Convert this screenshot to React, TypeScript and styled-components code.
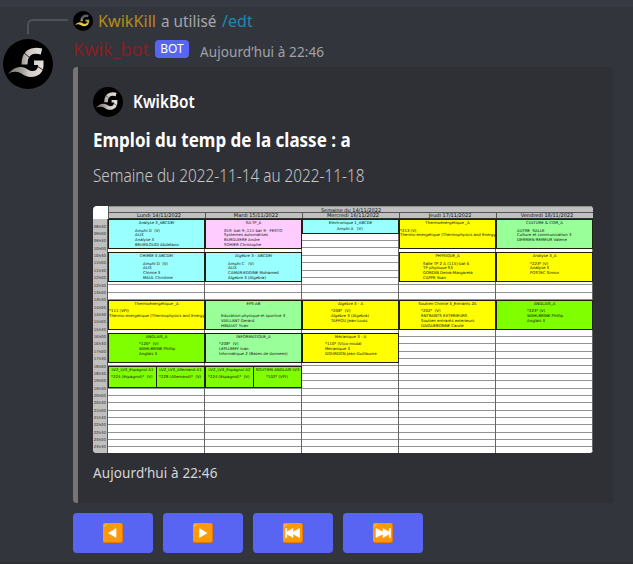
import React from "react";
import styled, { createGlobalStyle } from "styled-components";

const GlobalStyle = createGlobalStyle`
  * { box-sizing: border-box; }
  body { margin: 0; background: #33353d; overflow: hidden; font-family: "Noto Sans", sans-serif; }
`;

const Page = styled.main`
  width: 633px;
  height: 564px;
  border-top: 7px solid #373a42;
  border-bottom: 2px solid #2d2f34;
  background: #33353d;
  display: grid;
  grid-template-columns: 73px 540px;
  align-content: start;
`;

const Gutter = styled.div`
  padding: 12px 0 0 3px;
`;

const ReplySpine = styled.div`
  width: 41px;
  height: 15px;
  margin-left: 24px;
  border: 2px solid #4f5259;
  border-right: 0;
  border-bottom: 0;
  border-top-left-radius: 6px;
`;

const AvatarSvg = styled.svg<{ $size: number }>`
  display: block;
  flex: none;
  width: ${(p) => p.$size}px;
  height: ${(p) => p.$size}px;
`;

const AvatarSlot = styled.div`
  margin-top: 5px;
`;

const Content = styled.div`
  display: flex;
  flex-direction: column;
`;

const Line = styled.div<{ $h: number }>`
  display: flex;
  align-items: center;
  height: ${(p) => p.$h}px;
`;

const Text = styled.span<{
  $size: number;
  $color: string;
  $weight?: number;
  $track?: number;
  $squeeze?: number;
  $ml?: number;
  $mt?: number;
}>`
  white-space: pre;
  font-size: ${(p) => p.$size}px;
  line-height: 24px;
  color: ${(p) => p.$color};
  font-weight: ${(p) => p.$weight ?? 400};
  letter-spacing: ${(p) => p.$track ?? 0}px;
  transform: ${(p) => (p.$squeeze ? `scaleX(${p.$squeeze})` : "none")};
  transform-origin: left center;
  margin-left: ${(p) => p.$ml ?? 0}px;
  margin-top: ${(p) => p.$mt ?? 0}px;
`;

const BotTag = styled.span`
  width: 34px;
  height: 18px;
  margin: 0 0 0 6px;
  border-radius: 4px;
  background: #5865f2;
  color: #fff;
  font-size: 12px;
  line-height: 18px;
  text-align: center;
`;

const Embed = styled.article`
  width: 540px;
  height: 436px;
  margin-top: 5px;
  padding: 20px 0 0 15px;
  border-left: 5px solid #757575;
  border-radius: 4px;
  background: #2f3035;
`;

const Actions = styled.div`
  display: flex;
  gap: 10px;
  margin-top: 10px;
`;

const ActionButton = styled.button`
  width: 80px;
  height: 40px;
  padding: 0;
  border: 0;
  border-radius: 4px;
  background: #5865f2;
  display: flex;
  align-items: center;
  justify-content: center;
`;

const Sheet = styled.div`
  width: 500px;
  height: 247px;
  margin-top: 16px;
  border-radius: 4px;
  overflow: hidden;
  background: #fff;
  color: #111;
  font-family: "DejaVu Sans", sans-serif;
  display: grid;
  grid-template-columns: 15px 485px;
  grid-template-rows: 13px 234px;
`;

const SheetHead = styled.div`
  background: #c0c0c0;
  border-left: 1px solid #555;
  font-size: 5px;
`;

const WeekTitle = styled.div`
  height: 7px;
  line-height: 6px;
  text-align: center;
  border-bottom: 1px solid #555;
  border-top: 1px solid #909090;
`;

const DayTitles = styled.div`
  display: grid;
  grid-template-columns: repeat(5, 97px);
  height: 6px;
  border-bottom: 1px solid #333;
`;

const DayTitle = styled.div`
  line-height: 5px;
  padding-left: 4px;
  text-align: center;
  border-right: 1px solid #555;
`;

const Hours = styled.div`
  background: #c0c0c0;
  border-right: 1px solid #555;
  padding-top: 3.7px;
  overflow: hidden;
`;

const Hour = styled.div`
  height: 7.37px;
  line-height: 7.37px;
  font-size: 3.9px;
  text-align: right;
  padding-right: 1px;
  color: #333;
`;

const Days = styled.div`
  display: grid;
  grid-template-columns: repeat(5, 97px);
  background: repeating-linear-gradient(#fff 0 6.37px, #929292 6.37px 7.37px);
`;

const Day = styled.div`
  display: grid;
  grid-template-columns: 1fr 1fr;
  grid-template-rows: repeat(63, 3.685px);
  border-right: 1px solid #666;
  min-width: 0;
`;

const Course = styled.div<{ $start: number; $span: number; $color: string; $half?: number }>`
  grid-row: ${(p) => p.$start + 1} / span ${(p) => p.$span};
  grid-column: ${(p) => (p.$half ? p.$half : "1 / -1")};
  margin-right: -1px;
  margin-bottom: -0.5px;
  padding-top: 0.8px;
  background: ${(p) => p.$color};
  border: 1px solid #202010;
  font-size: 3.9px;
  line-height: 4.9px;
  white-space: pre;
  overflow: hidden;
`;

const CourseTitle = styled.div`
  text-align: center;
`;

const CourseBody = styled.div<{ $left: number; $gap: number }>`
  margin: ${(p) => p.$gap}px 0 0 ${(p) => p.$left}px;
`;

const CYAN = "#99ffff";
const YELLOW = "#ffff00";
const GREEN = "#80ff00";
const MINT = "#99ff99";
const PINK = "#ffccff";

type CourseData = {
  start: number;
  span: number;
  color: string;
  title: string;
  left: number;
  lines: string[];
  half?: number;
  gap?: number;
};

const days: { name: string; courses: CourseData[] }[] = [
  {
    name: "Lundi 14/11/2022",
    courses: [
      { start: 0, span: 8, color: CYAN, title: "Analyse 3_ABCDEI", left: 26, lines: ["Amphi D  (V)", "ALIX", "Analyse 3", "BELMILOUDI Abdelaziz"] },
      { start: 9, span: 8, color: CYAN, title: "CHIMIE 3 ABCDEI", left: 34, lines: ["Amphi D  (V)", "ALIX", "Chimie 3", "MAUL Christine"] },
      { start: 22, span: 8, color: YELLOW, title: "Thermoénergétique _A", left: 0, lines: ["*111 (VPI)", "Thermo-energetique (Thermophysics and Energy)"] },
      { start: 31, span: 8, color: GREEN, title: "ANGLAIS_A", left: 30, lines: ["*126*  (V)", "WAHLBRINK Phillip", "Anglais 3"] },
      { start: 40, span: 6, color: GREEN, half: 1, gap: 2.2, title: "LV2_LV3_Espagnol A1", left: 2, lines: ["*224 (Espagnol)*  (V)"] },
      { start: 40, span: 6, color: GREEN, half: 2, gap: 2.2, title: "LV2_LV3_Allemand A1", left: 2, lines: ["*228 (Allemand)*  (V)"] },
    ],
  },
  {
    name: "Mardi 15/11/2022",
    courses: [
      { start: 0, span: 8, color: PINK, title: "SA-TP_A", left: 18, lines: ["019 -bat 9-,111-bat 9-  FESTO", "Systemes automatises", "BURGUIERE Andre", "SOHIER Christophe"] },
      { start: 9, span: 8, color: CYAN, title: "Algèbre 3 - ABCDEI", left: 22, lines: ["Amphi C   (V)", "ALIX", "CAMAR-EDDINE Mohamed", "Algebre 3 (Algebra)"] },
      { start: 22, span: 8, color: MINT, title: "EPS-AB", left: 15, lines: [" ", "Education physique et sportive 3", "VAILLANT Gerard", "HINAULT Yvan"] },
      { start: 31, span: 8, color: MINT, title: "INFORMATIQUE_A", left: 13, lines: ["*208*  (V)", "LEPLUMEY Ivan", "Informatique 2 (Bases de donnees)"] },
      { start: 40, span: 6, color: GREEN, half: 1, gap: 2.2, title: "LV2_LV3_Espagnol A2", left: 2, lines: ["*224 (Espagnol)*  (V)"] },
      { start: 40, span: 6, color: GREEN, half: 2, gap: 2.2, title: "SOUTIEN ANGLAIS LV3", left: 12, lines: ["*102* (VPI)"] },
    ],
  },
  {
    name: "Mercredi 16/11/2022",
    courses: [
      { start: 0, span: 4, color: CYAN, gap: 1, title: "Electronique 1_ABCDE", left: 34, lines: ["Amphi A   (V)"] },
      { start: 22, span: 8, color: YELLOW, title: "Algèbre 3 - A", left: 28, lines: ["*208*  (V)", "Algebre 3 (Algebra)", "TAFFOU Jean-Louis"] },
      { start: 31, span: 8, color: YELLOW, title: "Mécanique 3 - A", left: 22, lines: ["*110* (V)co-modal", "Mecanique 3", "GOURDON Jean-Guillaume"] },
    ],
  },
  {
    name: "Jeudi 17/11/2022",
    courses: [
      { start: 0, span: 8, color: YELLOW, title: "Thermoénergétique _A", left: 0, lines: ["*213 (V)", "Thermo-energetique (Thermophysics and Energy)"] },
      { start: 9, span: 8, color: YELLOW, title: "PHYSIQUE_A", left: 23, lines: ["Salle TP 2 A (115)-bat 6", "TP physique S3", "GORDIN Deina-Margareta", "CAPPE Yoan"] },
      { start: 22, span: 8, color: YELLOW, title: "Soutien Chimie 3_Entrants 2A", left: 21, lines: ["*202*  (V)", "ENTRANTS EXTERIEURS", "Soutien entrants exterieurs", "DAIGUEBONNE Carole"] },
    ],
  },
  {
    name: "Vendredi 18/11/2022",
    courses: [
      { start: 0, span: 8, color: MINT, title: "CULTURE & COM_A", left: 20, lines: ["AUTRE  SALLE", "Culture et communication 3", "DERRIEN-REMEUR Valerie"] },
      { start: 9, span: 8, color: YELLOW, title: "Analyse 3_A", left: 33, lines: ["*223* (V)", "Analyse 3", "POSTEC Simon"] },
      { start: 22, span: 8, color: GREEN, title: "ANGLAIS_A", left: 30, lines: ["*223* (V)", "WAHLBRINK Phillip", "Anglais 3"] },
    ],
  },
];

const hours = Array.from({ length: 31 }, (_, i) => {
  const minutes = 510 + i * 30;
  return `${String(Math.floor(minutes / 60)).padStart(2, "0")}h${minutes % 60 ? "30" : "00"}`;
});

function Avatar({ size, id, gold }: { size: number; id: string; gold?: boolean }) {
  return (
    <AvatarSvg $size={size} viewBox="0 0 50 50">
      <defs>
        <linearGradient id={id} gradientUnits="userSpaceOnUse" x1="5" y1={gold ? 9 : 20} x2={gold ? 5 : 40} y2={gold ? 38 : 20}>
          <stop offset="0" stopColor={gold ? "#555" : "#77726a"} />
          <stop offset=".4" stopColor={gold ? "#777" : "#a39e98"} />
          <stop offset=".6" stopColor={gold ? "#d9b92f" : "#d0cac6"} />
          <stop offset="1" stopColor={gold ? "#ecd450" : "#e6e0dc"} />
        </linearGradient>
      </defs>
      <circle cx="25" cy="25" r="25" fill="#000" />
      <path d="M38.500 12.500C28 10 21.500 14 21.500 25.500" fill="none" stroke={`url(#${id})`} strokeWidth="6" />
      <path
        fill={`url(#${id})`}
        d="M31 21.500H40.500V27C40 34 35 38 28 38C21 38 19 33.500 14 33C10 32.500 8 33.500 5 35C9 30 14 27.500 18 28C24 28.500 25 32 29 32C33 32 35 30 35 26H31Z"
      />
      <path d="M21 14l5 4M34 27l6 4" stroke="#000" strokeWidth=".8" />
    </AvatarSvg>
  );
}

const EmojiSvg = styled.svg`
  display: block;
  width: 20px;
  height: 20px;
`;

const glyphs: Record<string, string> = {
  "Page précédente": "M13 5.500v9l-7.500-4.500z",
  "Page suivante": "M6.500 5.500v9l7.500-4.500z",
  "Première page": "M2.500 5.500h1.200v3.500L10 5.500v3.500L16.500 5.500v9L10 11v3.500l-6.300-3.500v3.500H2.500z",
  "Dernière page": "M17.500 5.500h-1.200v3.500L10 5.500v3.500L3 5.500v9l7-3.500v3.500l6.300-3.500v3.500h1.200z",
};

function Emoji({ d }: { d: string }) {
  return (
    <EmojiSvg viewBox="0 0 20 20">
      <rect width="20" height="20" rx="2" fill="#e87700" />
      <rect width="19" height="19" rx="2" fill="#ff9908" />
      <path d="M1.500 3.200Q1.500 1.500 3.500 1.500" stroke="#ffc65c" strokeWidth="1" fill="none" strokeLinecap="round" />
      <path d={d} fill="#fff" stroke="#fff" strokeWidth=".6" strokeLinejoin="round" />
    </EmojiSvg>
  );
}

function Timetable() {
  return (
    <Sheet>
      <div />
      <SheetHead>
        <WeekTitle>Semaine du 14/11/2022</WeekTitle>
        <DayTitles>
          {days.map((d) => (
            <DayTitle key={d.name}>{d.name}</DayTitle>
          ))}
        </DayTitles>
      </SheetHead>
      <Hours>
        {hours.map((h) => (
          <Hour key={h}>{h}</Hour>
        ))}
      </Hours>
      <Days>
        {days.map((d) => (
          <Day key={d.name}>
            {d.courses.map((c, i) => (
              <Course key={i} $start={c.start} $span={c.span} $color={c.color} $half={c.half}>
                <CourseTitle>{c.title}</CourseTitle>
                <CourseBody $left={c.left} $gap={c.gap ?? 2.8}>
                  {c.lines.map((l, j) => (
                    <div key={j}>{l}</div>
                  ))}
                </CourseBody>
              </Course>
            ))}
          </Day>
        ))}
      </Days>
    </Sheet>
  );
}

export default function App() {
  return (
    <>
      <GlobalStyle />
      <Page>
        <Gutter>
          <ReplySpine />
          <AvatarSlot>
            <Avatar size={50} id="metal-large" />
          </AvatarSlot>
        </Gutter>
        <Content>
          <Line $h={28}>
            <Avatar size={20} id="metal-gold" gold />
            <Text $size={17} $color="#b58d16" $ml={5} $squeeze={0.95}>KwikKill</Text>
            <Text $size={17} $color="#a5a7aa" $ml={2} $squeeze={0.9}>a utilisé</Text>
            <Text $size={17} $color="#168bb5" $ml={-1} $squeeze={0.95}>/edt</Text>
          </Line>
          <Line $h={27}>
            <Text $size={18} $color="#8c1d20" $mt={1}>Kwik_bot</Text>
            <BotTag>BOT</BotTag>
            <Text $size={13.5} $color="#a0a2a6" $ml={11} $mt={6} $track={0.1}>Aujourd’hui à 22:46</Text>
          </Line>
          <Embed>
            <Line $h={30}>
              <Avatar size={30} id="metal-small" />
              <Text $size={17} $color="#fff" $weight={600} $ml={10} $squeeze={0.9}>KwikBot</Text>
            </Line>
            <Line $h={47}>
              <Text $size={19} $color="#fff" $weight={700} $squeeze={0.895} $mt={-2}>Emploi du temp de la classe : a</Text>
            </Line>
            <Line $h={26}>
              <Text $size={18} $color="#c5c6c8" $weight={300} $squeeze={0.852} $mt={-5}>Semaine du 2022-11-14 au 2022-11-18</Text>
            </Line>
            <Timetable />
            <Line $h={40}>
              <Text $size={13.5} $color="#d5d6d8" $track={0.12}>Aujourd’hui à 22:46</Text>
            </Line>
          </Embed>
          <Actions>
            {Object.entries(glyphs).map(([name, d]) => (
              <ActionButton key={name} aria-label={name}>
                <Emoji d={d} />
              </ActionButton>
            ))}
          </Actions>
        </Content>
      </Page>
    </>
  );
}
